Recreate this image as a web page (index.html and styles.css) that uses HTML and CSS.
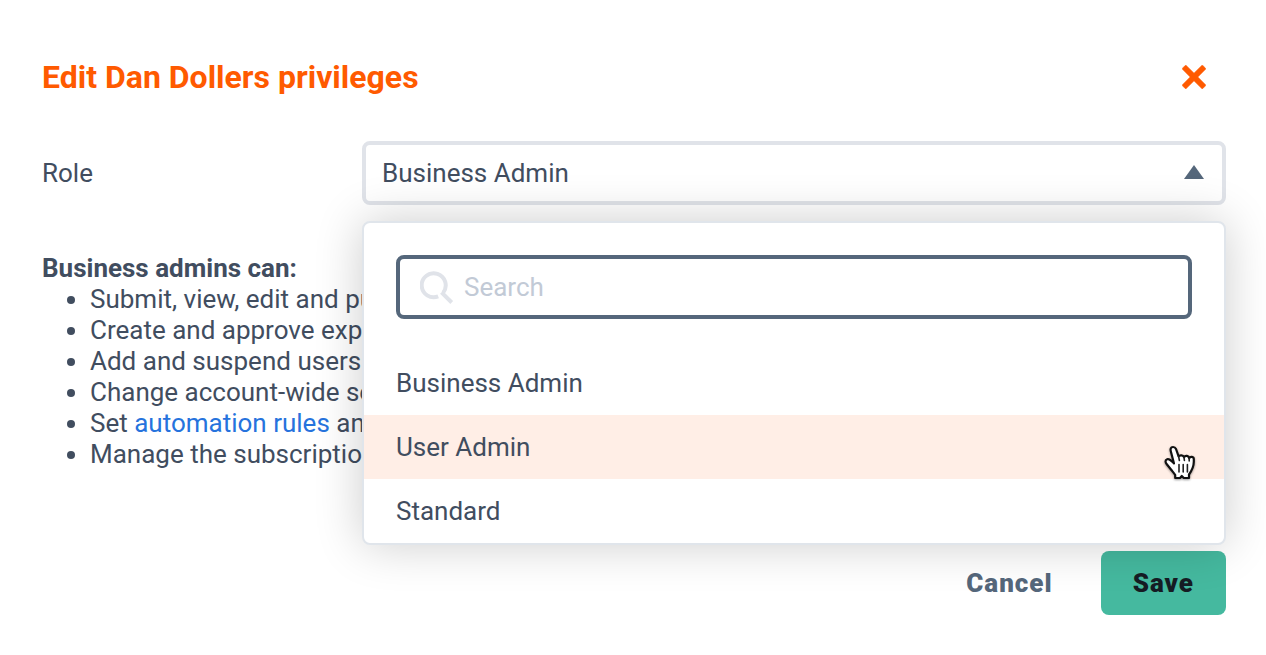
FILE: index.html
```html
<!DOCTYPE html>
<html lang="en">
<head>
<meta charset="utf-8">
<meta name="viewport" content="width=device-width, initial-scale=1">
<title>Edit Dan Dollers privileges</title>
<link rel="stylesheet" href="styles.css">
</head>
<body>
<main class="dialog">
  <header class="dialog-header">
    <h1 class="title">Edit Dan Dollers privileges</h1>
    <button class="close" type="button" aria-label="Close">
      <svg width="24" height="24" viewBox="0 0 24 24" aria-hidden="true"><path d="M4.2 0.5 12 8.2 19.8 0.5Q20.3 0 20.8 0.5L23.5 3.2Q24 3.7 23.5 4.2L15.8 12 23.5 19.8Q24 20.3 23.5 20.8L20.8 23.5Q20.3 24 19.8 23.5L12 15.8 4.2 23.5Q3.7 24 3.2 23.5L0.5 20.8Q0 20.3 0.5 19.8L8.2 12 0.5 4.2Q0 3.7 0.5 3.2L3.2 0.5Q3.7 0 4.2 0.5Z" fill="#ff5a00" stroke="#ff5a00" stroke-width="0.6"/></svg>
    </button>
  </header>

  <div class="field">
    <label class="field-label" for="role">Role</label>
    <div class="picker">
      <select class="role" id="role">
        <option selected>Business Admin</option>
        <option>User Admin</option>
        <option>Standard</option>
      </select>
      <svg class="arrow" width="20" height="14" viewBox="0 0 20 14" aria-hidden="true"><path d="M10 0 20 14H0Z" fill="#55677b"/></svg>
      <div class="menu">
        <div class="search">
          <svg class="search-icon" width="34" height="34" viewBox="0 0 34 34" fill="none" stroke="#e0e3e9" stroke-width="4" aria-hidden="true"><path d="M18.2 26.4A12 12 0 1 1 23.2 22.6"/><path d="M21.5 22.3 31.7 32.5"/></svg>
          <input class="search-input" type="text" placeholder="Search" aria-label="Search">
        </div>
        <div class="options">
          <button class="option" type="button">Business Admin</button>
          <button class="option option-active" type="button">User Admin</button>
          <button class="option" type="button">Standard</button>
        </div>
        <svg class="pointer" width="34" height="38" viewBox="0 0 34 38" aria-hidden="true">
          <path d="M10 3C7.6 3 7.2 5.2 7.8 7.2L11 19.5C9.2 17.6 6.5 14.5 4.2 15.3 1.7 16.2 2.4 18.5 3.8 20.2L8.6 26.2C9.8 28 11.5 29.5 12.2 31V34H17L18.8 32 20.8 34H26V30.5C28.5 27 30.8 22 30.8 17.8V15.2C30.8 12.5 27.2 12.2 26.2 14.2 25.7 11.5 22.3 11 21 13.2 20 10.8 16.8 10.8 15.6 12.4L13 5C12.4 3.7 11.4 3 10 3Z" fill="#fff" stroke="#111" stroke-width="2.2" stroke-linejoin="round"/>
          <path d="M15.6 12.4 16.4 16.5M21 13.2 21.4 16.5M26.2 14.2V17M16 20.5V28M20.2 20.5V28M24.4 20.5V28" stroke="#222" stroke-width="1.6" stroke-linecap="round"/>
        </svg>
      </div>
    </div>
  </div>

  <section class="summary">
    <h2 class="summary-title">Business admins can:</h2>
    <ul class="abilities">
      <li>Submit, view, edit and pull</li>
      <li>Create and approve exps</li>
      <li>Add and suspend users</li>
      <li>Change account-wide set</li>
      <li>Set <a class="link" href="#rules">automation rules</a> and</li>
      <li>Manage the subscription</li>
    </ul>
  </section>

  <footer class="actions">
    <button class="btn" type="button">Cancel</button>
    <button class="btn btn-save" type="button">Save</button>
  </footer>
</main>
</body>
</html>
```
FILE: styles.css
```css
* {
  box-sizing: border-box;
}

body {
  margin: 0;
  background: #fff;
  color: #414d5f;
  font-family: Roboto, "Liberation Sans", sans-serif;
  font-size: 26px;
  line-height: 31px;
}

button,
input,
select {
  margin: 0;
  font: inherit;
  color: inherit;
}

.dialog {
  padding: 57px 40px 40px 42px;
}

.dialog-header {
  display: flex;
  align-items: center;
  justify-content: space-between;
  height: 40px;
  padding-right: 20px;
}

.title {
  margin: 0;
  color: #ff5a00;
  font-size: 32px;
  line-height: 40px;
  font-weight: 700;
}

.close {
  display: flex;
  padding: 0;
  border: 0;
  background: none;
}

.field {
  display: grid;
  grid-template-columns: 320px 1fr;
  align-items: center;
  margin-top: 44px;
}

.picker {
  position: relative;
}

.role {
  display: block;
  width: 100%;
  height: 64px;
  padding: 0 48px 0 16px;
  border: 4px solid #e0e3e9;
  border-radius: 8px;
  background: #fff;
  appearance: none;
}

.arrow {
  position: absolute;
  top: 24px;
  right: 22px;
  pointer-events: none;
}

.menu {
  position: absolute;
  z-index: 1;
  top: 80px;
  left: 0;
  right: 0;
  border: 2px solid #e0e5eb;
  border-radius: 8px;
  background: #fff;
  box-shadow: 0 0 48px rgba(0, 0, 0, 0.2);
}

.search {
  display: flex;
  align-items: center;
  gap: 10px;
  height: 64px;
  margin: 32px;
  padding: 0 20px;
  border: 4px solid #55677b;
  border-radius: 8px;
}

.search-input {
  flex: 1;
  min-width: 0;
  padding: 0;
  border: 0;
  outline: 0;
  background: none;
}

.search-input::placeholder {
  color: #c2cad6;
  opacity: 1;
}

.option {
  display: block;
  width: 100%;
  height: 64px;
  padding: 0 32px;
  border: 0;
  background: none;
  text-align: left;
}

.option:last-child {
  border-radius: 0 0 6px 6px;
}

.option-active {
  background: #ffeee6;
}

.pointer {
  position: absolute;
  right: 27px;
  bottom: 61px;
  filter: drop-shadow(0 1px 1px rgba(0, 0, 0, 0.4));
}

.summary {
  margin-top: 48px;
}

.summary-title {
  margin: 0;
  font-size: 26px;
  line-height: 31px;
  font-weight: 700;
}

.abilities {
  margin: 0;
  padding-left: 48px;
}

.link {
  color: #2673dd;
  text-decoration: none;
}

.actions {
  display: flex;
  justify-content: flex-end;
  gap: 16px;
  margin-top: 81px;
}

.btn {
  height: 64px;
  padding: 0 32px;
  border: 0;
  border-radius: 8px;
  background: none;
  color: #55677b;
  font-weight: 900;
  letter-spacing: 1px;
}

.btn-save {
  background: #45b99f;
  color: #161c24;
}
```
